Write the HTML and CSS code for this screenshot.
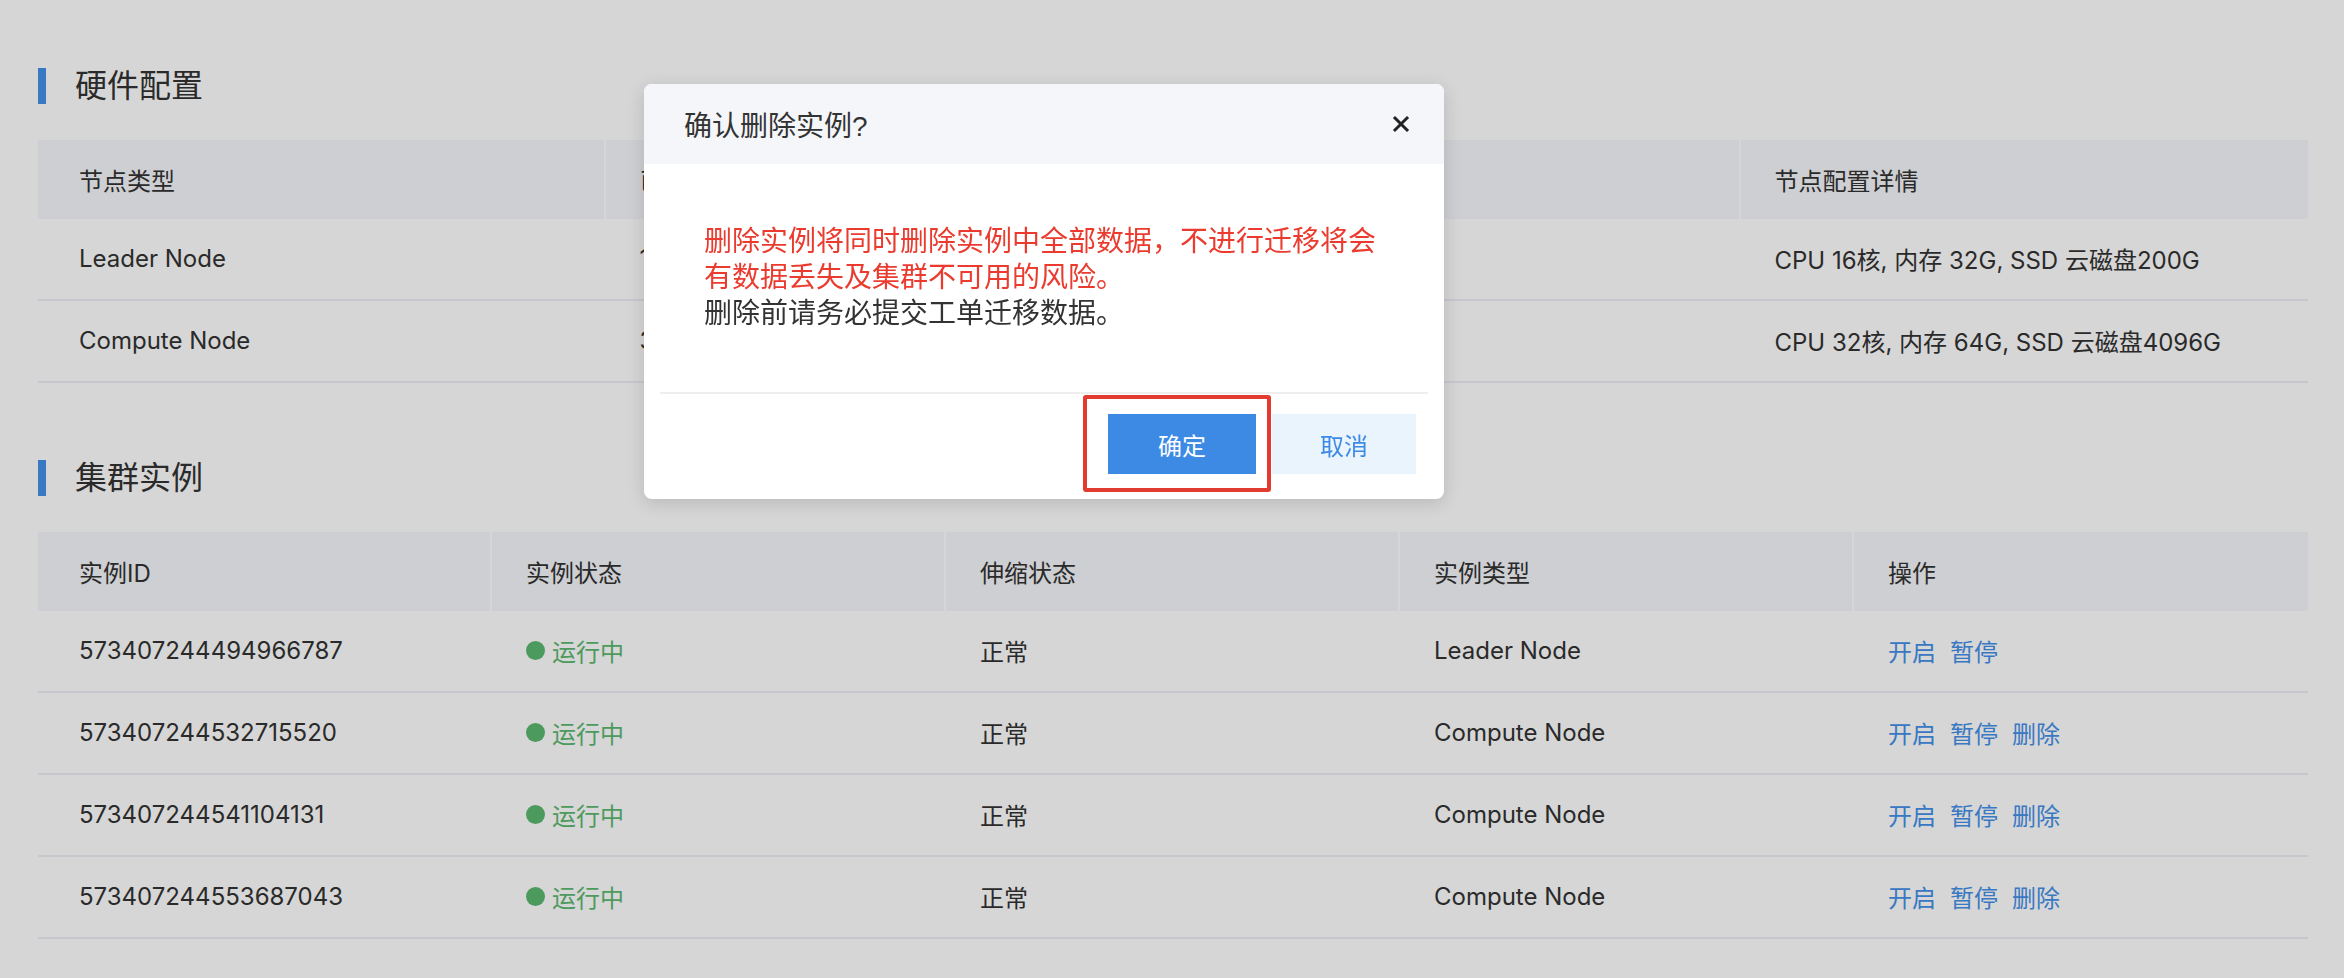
FILE: index.html
```html
<!DOCTYPE html>
<html lang="zh-CN">
<head>
    <meta charset="UTF-8">
    <meta name="viewport" content="width=device-width, initial-scale=1.0">
    <title>集群详情</title>
    <link rel="stylesheet" href="styles.css">
</head>
<body>
    <div class="page">
        <section class="section">
            <div class="section-head"><h2>硬件配置</h2></div>
            <table class="data-table">
                <thead>
                    <tr><th>节点类型</th><th>已部署节点数</th><th>节点规格</th><th>节点配置详情</th></tr>
                </thead>
                <tbody>
                    <tr><td>Leader Node</td><td>1</td><td>16C32G</td><td>CPU 16核, 内存 32G, SSD 云磁盘200G</td></tr>
                    <tr><td>Compute Node</td><td>3</td><td>32C64G</td><td>CPU 32核, 内存 64G, SSD 云磁盘4096G</td></tr>
                </tbody>
            </table>
        </section>

        <section class="section">
            <div class="section-head"><h2>集群实例</h2></div>
            <table class="data-table">
                <thead>
                    <tr><th>实例ID</th><th>实例状态</th><th>伸缩状态</th><th>实例类型</th><th>操作</th></tr>
                </thead>
                <tbody>
                    <tr>
                        <td>573407244494966787</td>
                        <td><span class="status running">运行中</span></td>
                        <td>正常</td>
                        <td>Leader Node</td>
                        <td class="actions"><a href="#">开启</a><a href="#">暂停</a></td>
                    </tr>
                    <tr>
                        <td>573407244532715520</td>
                        <td><span class="status running">运行中</span></td>
                        <td>正常</td>
                        <td>Compute Node</td>
                        <td class="actions"><a href="#">开启</a><a href="#">暂停</a><a href="#">删除</a></td>
                    </tr>
                    <tr>
                        <td>573407244541104131</td>
                        <td><span class="status running">运行中</span></td>
                        <td>正常</td>
                        <td>Compute Node</td>
                        <td class="actions"><a href="#">开启</a><a href="#">暂停</a><a href="#">删除</a></td>
                    </tr>
                    <tr>
                        <td>573407244553687043</td>
                        <td><span class="status running">运行中</span></td>
                        <td>正常</td>
                        <td>Compute Node</td>
                        <td class="actions"><a href="#">开启</a><a href="#">暂停</a><a href="#">删除</a></td>
                    </tr>
                </tbody>
            </table>
        </section>
    </div>

    <!-- delete confirm dialog -->
    <div class="mask"></div>
    <div class="dialog">
        <div class="dialog-header">
            <span class="dialog-title">确认删除实例?</span>
            <button class="dialog-close" aria-label="关闭">
                <svg width="18" height="18" viewBox="0 0 18 18"><path d="M3 3 L15 15 M15 3 L3 15" stroke="#222" stroke-width="3" stroke-linecap="square" fill="none"/></svg>
            </button>
        </div>
        <div class="dialog-body">
            <p class="warn">删除实例将同时删除实例中全部数据，不进行迁移将会有数据丢失及集群不可用的风险。</p>
            <p>删除前请务必提交工单迁移数据。</p>
        </div>
        <div class="dialog-footer">
            <span class="marked"><button class="btn btn-primary">确定</button></span>
            <button class="btn btn-light">取消</button>
        </div>
    </div>
</body>
</html>
```

FILE: styles.css
```css
* {
    box-sizing: border-box;
}

body {
    margin: 0;
    background-color: #fff;
    color: #333;
    font-family: "Liberation Sans", "Noto Sans CJK SC", sans-serif;
    min-height: 100vh;
}

.page {
    padding: 68px 36px 0 38px;
}

.section + .section {
    margin-top: 77px;
}

/* Section title with blue bar */
.section-head {
    display: flex;
    align-items: center;
    height: 36px;
    margin-bottom: 36px;
}
.section-head::before {
    content: '';
    width: 8px;
    height: 36px;
    background-color: #4590e8;
    margin-right: 29px;
}
.section-head h2 {
    margin: 0;
    font-size: 32px;
    font-weight: 400;
    line-height: 36px;
    color: #333;
}

/* Tables */
.data-table {
    width: 100%;
    border-collapse: separate;
    border-spacing: 0;
    table-layout: fixed;
    font-family: "Inter", "Noto Sans CJK SC", sans-serif;
    font-size: 24px;
}
.data-table th {
    height: 79px;
    padding: 0 34px;
    background-color: #f6f7fc;
    border-right: 2px solid #fff;
    text-align: left;
    font-weight: 400;
    color: #333;
}
.data-table th:last-child {
    border-right: none;
}
.data-table td {
    height: 82px;
    padding: 0 34px 2px;
    border-bottom: 2px solid #eeeef6;
    color: #333;
    white-space: nowrap;
}
.data-table th:first-child, .data-table td:first-child {
    padding-left: 41px;
}

.status {
    display: inline-flex;
    align-items: center;
}
.status::before {
    content: '';
    width: 19px;
    height: 19px;
    border-radius: 50%;
    margin-right: 7px;
}
.status.running {
    color: #5bb870;
}
.status.running::before {
    background-color: #5bb870;
}

.actions a {
    color: #4590e8;
    text-decoration: none;
    margin-right: 14px;
}

/* Mask + dialog */
.mask {
    position: fixed;
    inset: 0;
    background-color: rgba(0, 0, 0, 0.16);
}

.dialog {
    position: absolute;
    left: 644px;
    top: 84px;
    width: 800px;
    background-color: #fff;
    border-radius: 8px;
    overflow: hidden;
    box-shadow: 0 4px 18px rgba(0, 0, 0, 0.14);
}
.dialog-header {
    height: 80px;
    padding: 0 34px 0 40px;
    background-color: #f5f6fa;
    display: flex;
    align-items: center;
    justify-content: space-between;
}
.dialog-title {
    font-size: 28px;
    color: #333;
}
.dialog-close {
    border: none;
    background: none;
    padding: 0;
    display: flex;
    cursor: pointer;
}

.dialog-body {
    padding: 60px;
    font-size: 28px;
    line-height: 36px;
    color: #333;
}
.dialog-body p {
    margin: 0;
}
.dialog-body .warn {
    color: #eb3b2f;
}

.dialog-footer {
    margin: 0 16px;
    padding: 20px 12px 25px 0;
    border-top: 2px solid #eee;
    display: flex;
    justify-content: flex-end;
}

.btn {
    height: 60px;
    border: none;
    border-radius: 0;
    font-family: inherit;
    font-size: 24px;
    cursor: pointer;
}
.btn-primary {
    width: 148px;
    background-color: #3d8ae5;
    color: #fff;
}
.btn-light {
    width: 144px;
    background-color: #eaf4fd;
    color: #3d8ae5;
}

/* red highlight around confirm button */
.marked {
    position: relative;
    display: inline-flex;
    margin-right: 16px;
}
.marked::after {
    content: '';
    position: absolute;
    top: -19px;
    left: -25px;
    right: -15px;
    bottom: -18px;
    border: 4px solid #e23b2f;
    border-radius: 3px;
}
```
